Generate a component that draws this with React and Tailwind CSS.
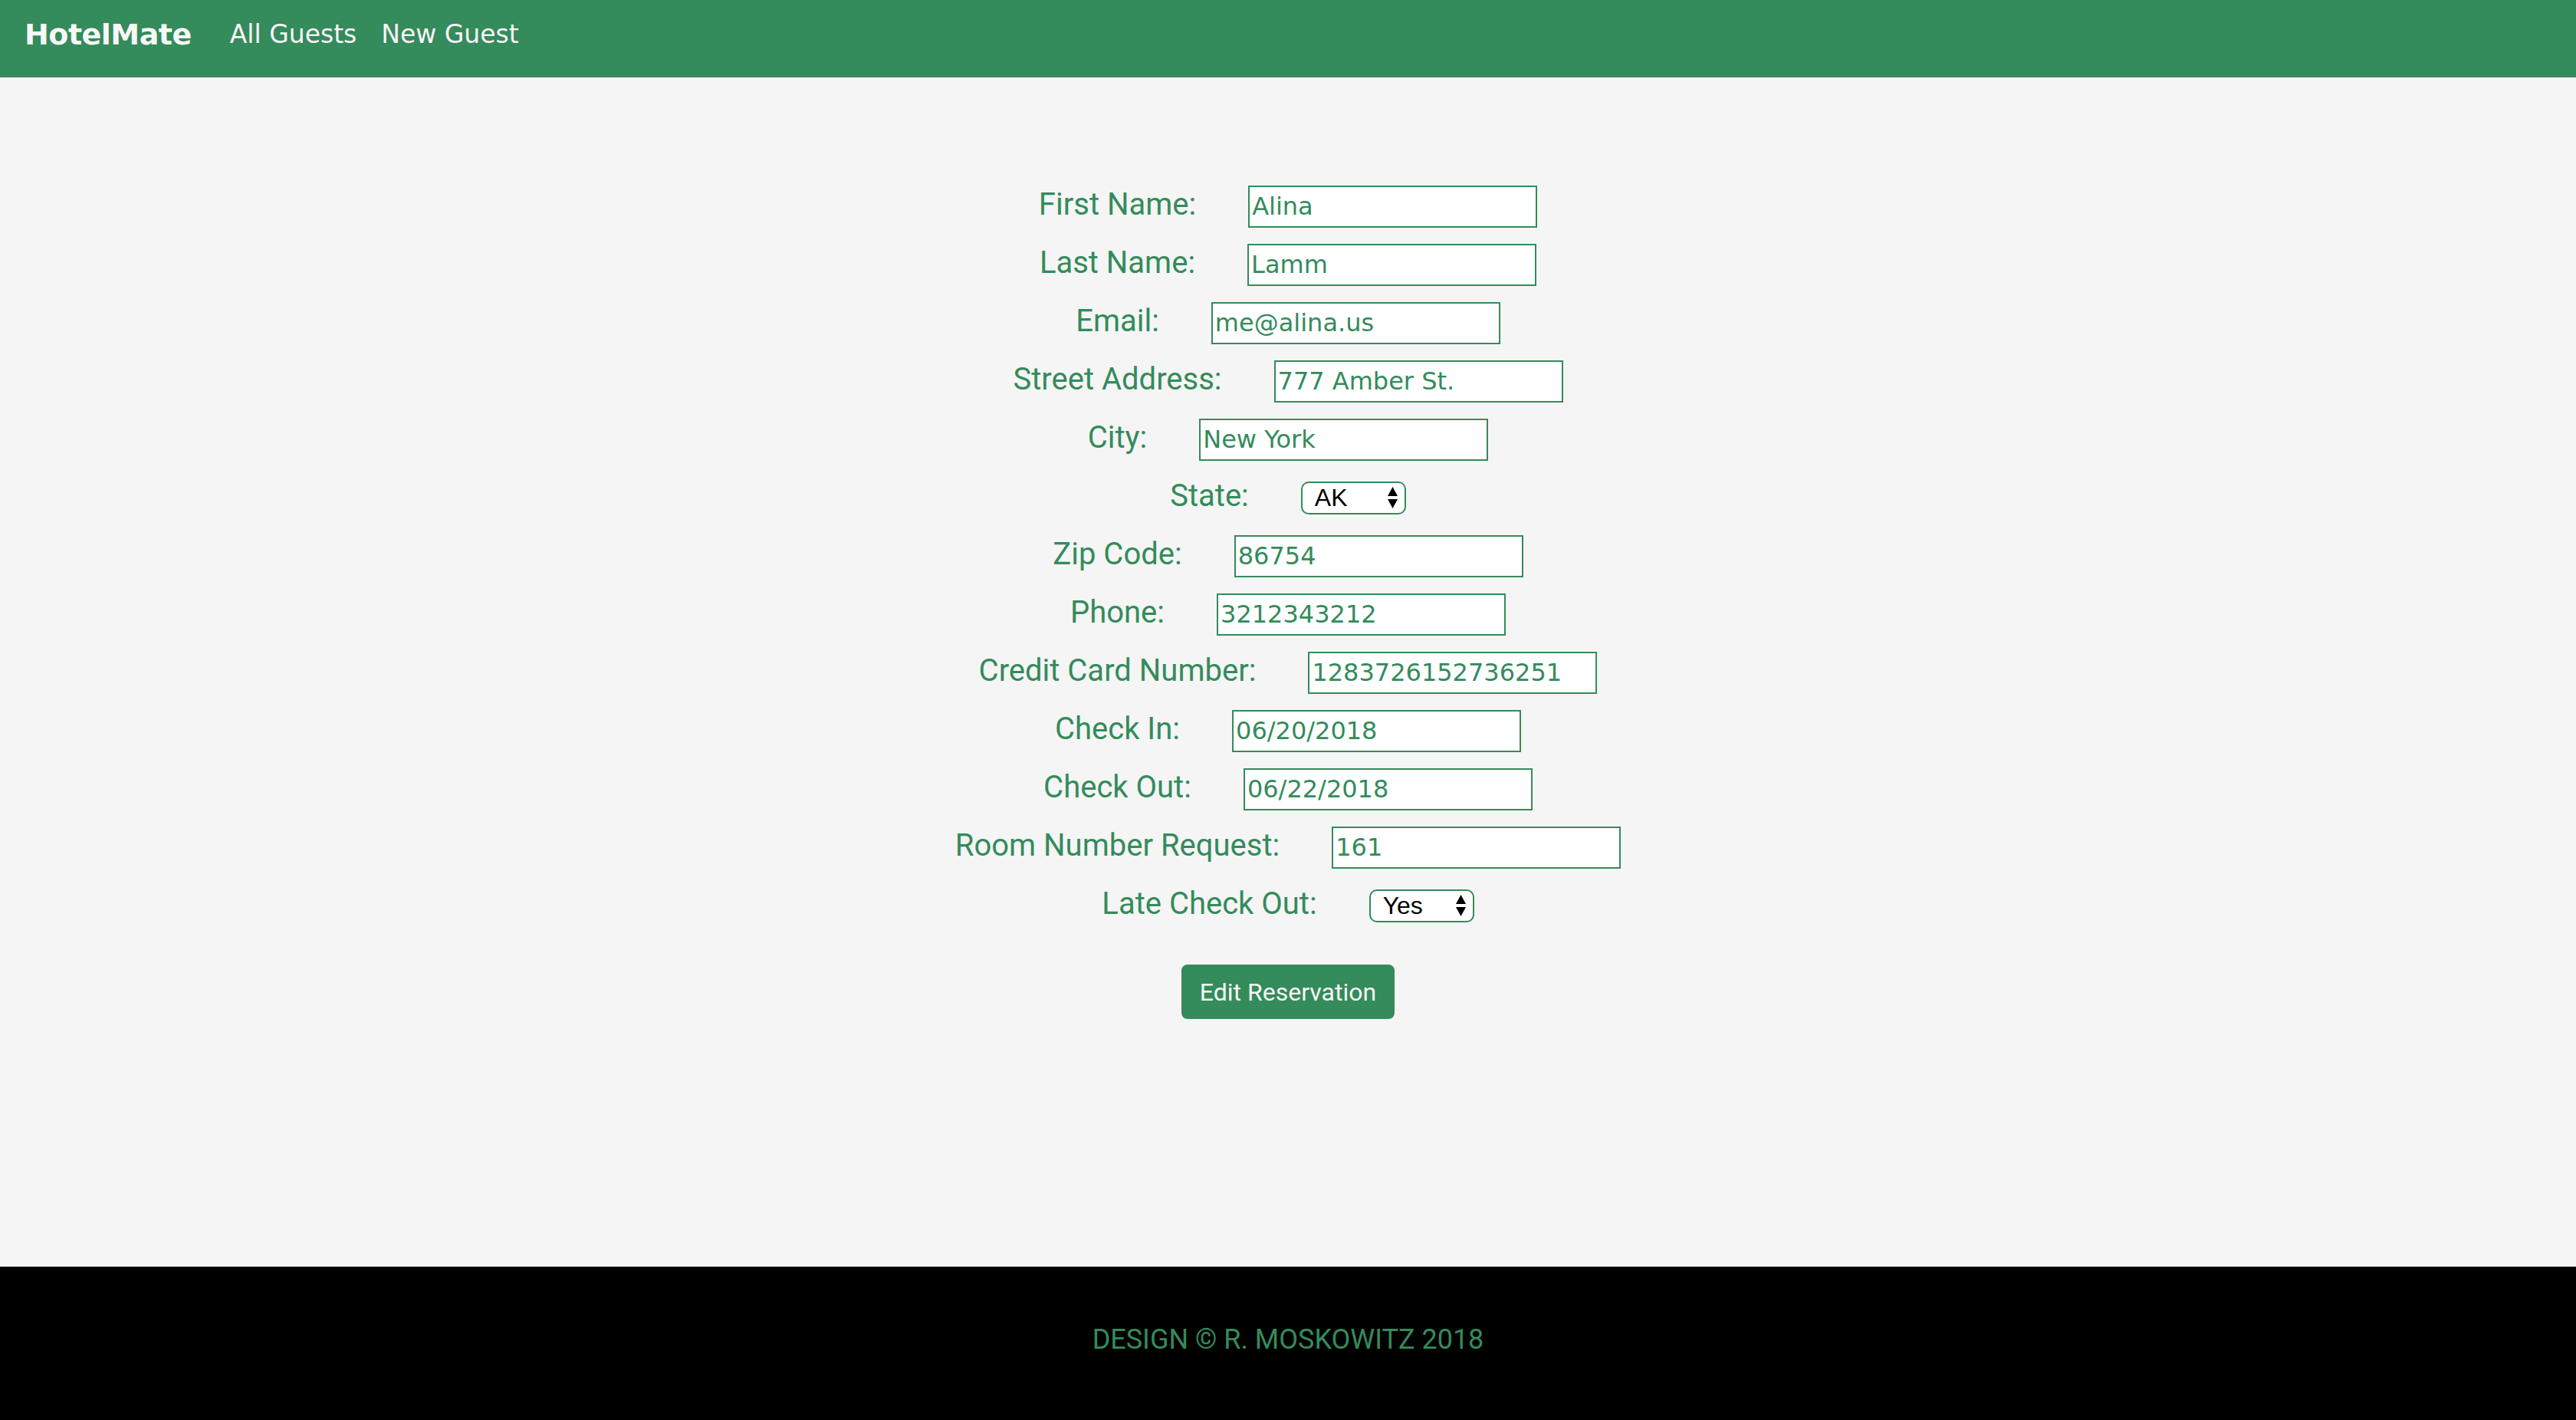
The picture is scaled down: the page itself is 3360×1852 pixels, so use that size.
import { useState } from 'react'

const fields = [
  { label: 'First Name:', value: 'Alina' },
  { label: 'Last Name:', value: 'Lamm' },
  { label: 'Email:', value: 'me@alina.us' },
  { label: 'Street Address:', value: '777 Amber St.' },
  { label: 'City:', value: 'New York' },
  { label: 'State:', value: 'AK', select: ['AK', 'AL', 'AZ', 'CA', 'NY'] },
  { label: 'Zip Code:', value: '86754' },
  { label: 'Phone:', value: '3212343212' },
  { label: 'Credit Card Number:', value: '1283726152736251' },
  { label: 'Check In:', value: '06/20/2018' },
  { label: 'Check Out:', value: '06/22/2018' },
  { label: 'Room Number Request:', value: '161' },
  { label: 'Late Check Out:', value: 'Yes', select: ['Yes', 'No'] },
]

function Arrows() {
  return (
    <svg width="15" height="30" viewBox="0 0 15 30" className="absolute right-[10px] top-1/2 -translate-y-1/2 pointer-events-none">
      <path d="M7.5 1 L14 13 L1 13 Z" fill="#000" />
      <path d="M1 17 L14 17 L7.5 29 Z" fill="#000" />
    </svg>
  )
}

export default function App() {
  const [form, setForm] = useState(() => Object.fromEntries(fields.map((f) => [f.label, f.value])))

  const update = (field, value) => setForm({ ...form, [field]: value })

  return (
    <div className="h-screen flex flex-col bg-[#f5f5f5]">
      <nav className="h-[101px] shrink-0 bg-[#348b5b] flex items-start pt-[22px] px-[32px] text-[#f7f7f7] font-['DejaVu_Sans',sans-serif]">
        <a className="text-[38px] font-bold leading-[46px] mr-[34px] tracking-[-0.5px]">HotelMate</a>
        <a className="text-[33px] leading-[46px] px-[16px]">All Guests</a>
        <a className="text-[33px] leading-[46px] px-[16px]">New Guest</a>
      </nav>

      <main className="flex-1 pt-[130px] flex flex-col items-center">
        {fields.map((f) => (
          <div key={f.label} className="h-[76px] flex items-center justify-center gap-[68px]">
            <label className="text-[40px] leading-[48px] text-[#348b5b] font-['Roboto',sans-serif] -mt-[4px]">
              {f.label}
            </label>
            {f.select ? (
              <div className="relative w-[137px] h-[43px]">
                <select
                  value={form[f.label]}
                  onChange={(e) => update(f.label, e.target.value)}
                  className="appearance-none w-full h-full bg-white border-2 border-[#348b5b] rounded-[10px] pl-[16px] text-[32px] leading-[38px] text-black font-['Liberation_Sans',sans-serif] outline-none"
                >
                  {f.select.map((o) => (
                    <option key={o} value={o}>{o}</option>
                  ))}
                </select>
                <Arrows />
              </div>
            ) : (
              <input
                value={form[f.label]}
                onChange={(e) => update(f.label, e.target.value)}
                className="w-[377px] h-[55px] bg-white border-2 border-[#348b5b] pl-[3px] text-[32px] text-[#348b5b] font-['DejaVu_Sans',sans-serif] outline-none"
              />
            )}
          </div>
        ))}

        <button className="mt-[39px] h-[71px] px-[24px] bg-[#348b5b] rounded-[8px] text-[32px] text-[#f7f7f7] font-['Roboto',sans-serif]">
          Edit Reservation
        </button>
      </main>

      <footer className="h-[200px] shrink-0 bg-black flex items-center justify-center pb-[10px]">
        <p className="text-[36px] uppercase text-[#348b5b] font-['Roboto',sans-serif]">
          Design © R. Moskowitz 2018
        </p>
      </footer>
    </div>
  )
}
